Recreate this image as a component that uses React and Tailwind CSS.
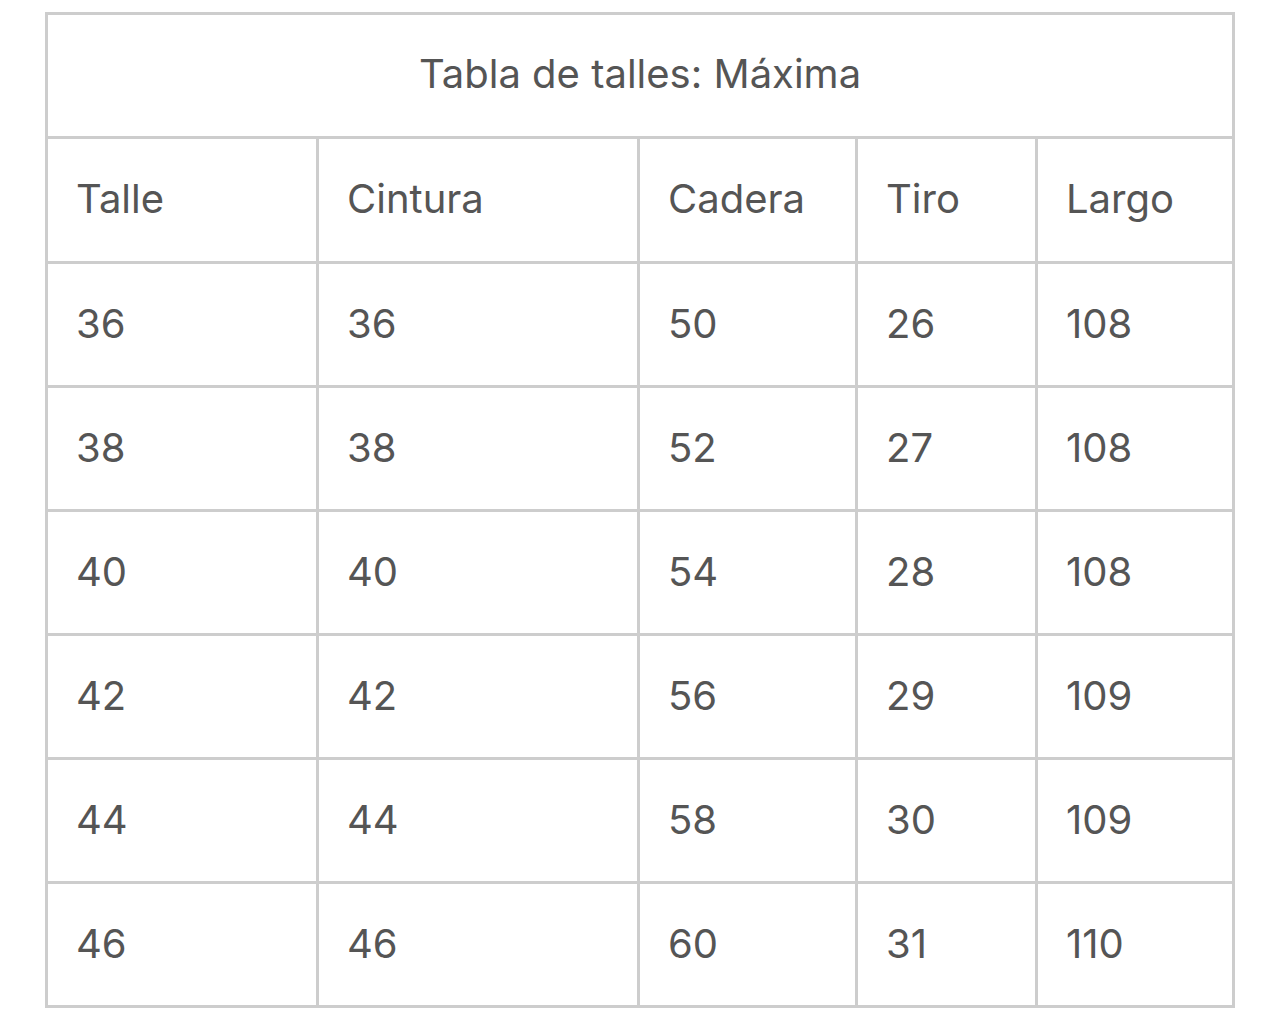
const rows = [
  ["36", "36", "50", "26", "108"],
  ["38", "38", "52", "27", "108"],
  ["40", "40", "54", "28", "108"],
  ["42", "42", "56", "29", "109"],
  ["44", "44", "58", "30", "109"],
  ["46", "46", "60", "31", "110"],
];

const headers = ["Talle", "Cintura", "Cadera", "Tiro", "Largo"];

export default function App() {
  return (
    <div className="min-h-screen bg-white pt-[12px] pl-[45px] font-['Inter',sans-serif] text-[#555555]">
      <table className="table-fixed border-collapse w-[1187px]">
        <colgroup>
          <col className="w-[271px]" />
          <col className="w-[321px]" />
          <col className="w-[218px]" />
          <col className="w-[180px]" />
          <col className="w-[197px]" />
        </colgroup>
        <thead>
          <tr className="h-[124px]">
            <th
              colSpan={5}
              className="border-[3px] border-[#cdcdcd] pb-[3px] text-center font-normal text-[40px]"
            >
              Tabla de talles: Máxima
            </th>
          </tr>
        </thead>
        <tbody>
          <tr className="h-[125px]">
            {headers.map((h) => (
              <td key={h} className="border-[3px] border-[#cdcdcd] pl-[28px] pb-[2px] text-left align-middle text-[40px]">
                {h}
              </td>
            ))}
          </tr>
          {rows.map((r, i) => (
            <tr key={i} className="h-[124px]">
              {r.map((v, j) => (
                <td key={j} className="border-[3px] border-[#cdcdcd] pl-[28px] pb-[2px] text-left align-middle text-[40px]">
                  {v}
                </td>
              ))}
            </tr>
          ))}
        </tbody>
      </table>
    </div>
  );
}
